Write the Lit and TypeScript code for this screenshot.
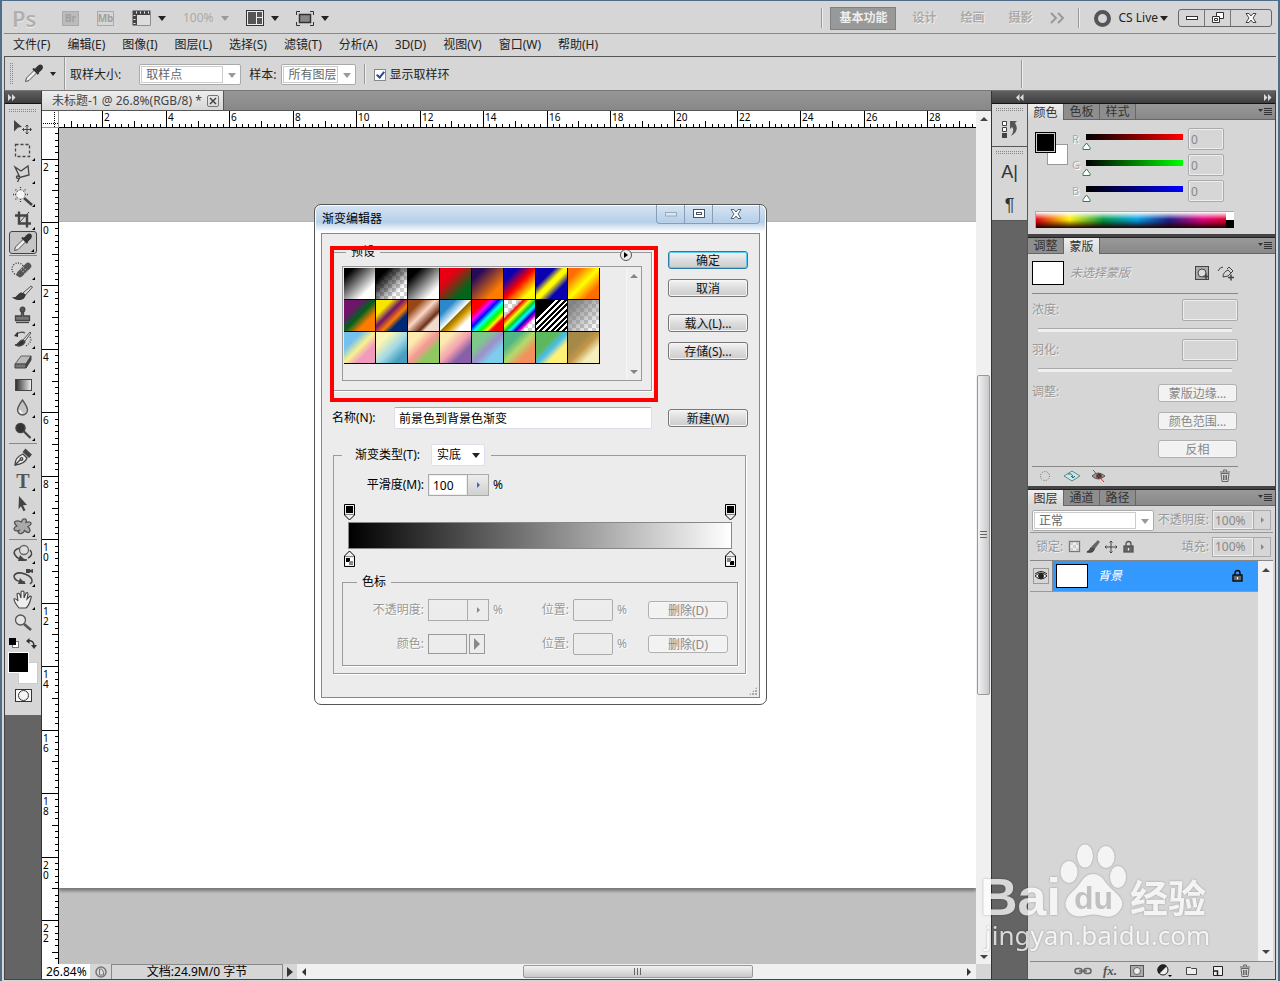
import { LitElement, html, svg, css, nothing } from "lit";
import type { TemplateResult } from "lit";
import { customElement } from "lit/decorators.js";
import { classMap } from "lit/directives/class-map.js";

const UNIT = 63.45;

const menus = ["文件(F)", "编辑(E)", "图像(I)", "图层(L)", "选择(S)", "滤镜(T)", "分析(A)", "3D(D)", "视图(V)", "窗口(W)", "帮助(H)"];

const checker = "repeating-conic-gradient(#cfcfcf 0 25%, #fff 0 50%) 0 0 / 8px 8px";

const presets: string[] = [
  "linear-gradient(135deg,#000 15%,#fff 75%)",
  `linear-gradient(135deg,#000 20%,transparent 75%), ${checker}`,
  "linear-gradient(135deg,#000 20%,#fff 80%)",
  "linear-gradient(135deg,#e60012 30%,#00661a 75%)",
  "linear-gradient(135deg,#290a59 20%,#ff7c00 75%)",
  "linear-gradient(135deg,#0a00b2 22%,#ff0000 50%,#fffc00 80%)",
  "linear-gradient(135deg,#0a00b2 30%,#fffc00 46%,#fffc00 54%,#0a00b2 72%)",
  "linear-gradient(135deg,#ff6e02 20%,#ffff00 50%,#ff6d00 78%)",
  "linear-gradient(135deg,#6f156c 28%,#00601b 50%,#fd7c00 72%)",
  "linear-gradient(135deg,#f9e600 25%,#6f156c 43%,#fd7c00 60%,#002874 73%)",
  "linear-gradient(135deg,#974616 22%,#fbd8c5 45%,#6c2e16 68%,#efdbcd 76%)",
  "linear-gradient(135deg,#2989cc 24%,#fff 49%,#906a00 51%,#d99f00 62%,#fff 78%)",
  "linear-gradient(135deg,#f00 22%,#f0f 33%,#00f 43%,#0ff 53%,#0f0 63%,#ff0 73%,#f00 80%)",
  `linear-gradient(135deg,transparent 26%,#f00 32%,#ff0 42%,#0c3 52%,#0ff 59%,#00c 67%,#f0c 75%,transparent 78%), ${checker}`,
  `linear-gradient(135deg,#000 28%,transparent 28%), linear-gradient(315deg,transparent 20%,transparent 20%), repeating-linear-gradient(135deg,#000 0 2px,#fff 2px 4px)`,
  `linear-gradient(135deg,rgba(120,120,120,.9) 15%,rgba(150,150,150,.1) 85%), ${checker}`,
  "linear-gradient(135deg,#75c1ed 28%,#f9f190 50%,#f19abd 70%)",
  "linear-gradient(135deg,#faf5b4 25%,#a0d8e6 55%,#46a0be 80%)",
  "linear-gradient(135deg,#fceab0 25%,#f69693 50%,#8fc860 70%)",
  "linear-gradient(135deg,#fceab0 22%,#f3a0b0 50%,#8760a8 72%)",
  "linear-gradient(135deg,#7ec88c 30%,#9d90cc 52%,#7dceed 72%)",
  "linear-gradient(135deg,#51b784 28%,#b5d96c 50%,#f3905c 72%)",
  "linear-gradient(135deg,#5cb85c 36%,#4abdf0 52%,#fff078 68%)",
  "linear-gradient(135deg,#a68948 35%,#c39848 52%,#f5efbe 74%)",
];

const g = (body: unknown, w = 24, h = 22) =>
  html`<svg width=${w} height=${h} viewBox="0 0 ${w} ${h}" fill="none" stroke="#444" stroke-width="1.3">${body}</svg>`;

const eyedropper = svg`<path d="M3.500 18.500l1-3.500 8-8 2.500 2.500-8 8z" fill="#eee" stroke="#555" stroke-width="1"/><path d="M11 5.500l5.500 5.500" stroke="#333" stroke-width="2"/><path d="M13 6.500l3.500-3.500q2-1.500 3.200-.2t0 3.200L16 9.500z" fill="#333" stroke="#333"/>`;
const brush = svg`<path d="M12 11l8-7 1.500 1-7 8z" fill="#ddd" stroke="#555" stroke-width="1"/><path d="M3 16c3 0 4-4 7-5l4 2c-1 4-6 6-11 3z" fill="#3c3c3c" stroke="#333"/>`;

const tools: { name: string; art: TemplateResult; corner?: boolean; gap?: boolean; on?: boolean }[] = [
  { name: "移动工具", art: g(svg`<path d="M3 3l8 7-4 .5-4 4z" fill="#444" stroke="none"/><path d="M11.500 12.500h9M16 8v9M14.500 9.500L16 8l1.500 1.500M14.500 15.500L16 17l1.500-1.500M13 11l-1.500 1.500L13 14M19 11l1.500 1.500L19 14" stroke-width="1"/>`) },
  { name: "矩形选框工具", corner: true, art: g(svg`<rect x="4.500" y="4.500" width="14" height="12" stroke-dasharray="3 2"/>`) },
  { name: "套索工具", corner: true, art: g(svg`<path d="M4 4l6 4 7-5 1 9-9 2.500zM9 14q-3-2-3.500 0t3 1l-2 4" />`) },
  { name: "魔棒工具", corner: true, art: g(svg`<path d="M13 12l8 7" stroke-width="2.600"/><circle cx="9.500" cy="8.500" r="4.500" fill="#f4f4f4" stroke="#aaa" stroke-width=".8"/><path d="M9.500 1v3M9.500 13v3M2 8.500h3M14 8.500h3M4.500 3.500l2 2M14.500 3.500l-2 2M4.500 13.500l2-2" stroke-dasharray="1 1" stroke="#444"/>`) },
  { name: "裁剪工具", corner: true, art: g(svg`<path d="M8 2.500v12h12M4 6.500h12v12" stroke-width="2.400"/><path d="M8 14l10-11" stroke-width="1"/>`) },
  { name: "吸管工具", corner: true, on: true, art: g(eyedropper) },
  { name: "修复画笔", corner: true, gap: true, art: g(svg`<circle cx="7" cy="10" r="6" stroke="#333" stroke-dasharray="1 1.500"/><path d="M9 15l8-8" stroke="#555" stroke-width="6.500" stroke-linecap="round"/><path d="M12 8.500l4.500 4M10 10.500l4 4" stroke="#bbb" stroke-dasharray="1 1.500"/>`) },
  { name: "画笔工具", corner: true, art: g(brush) },
  { name: "仿制图章", corner: true, art: g(svg`<circle cx="11.500" cy="4.500" r="2.300" fill="#555"/><path d="M10.500 7h2v4h6v4.500h-14V11h6z" fill="#777"/><path d="M5 17.500h13"/>`) },
  { name: "历史记录画笔", corner: true, art: g(svg`<path d="M12 12l7-8 1 1-6 8z" fill="#ddd" stroke="#555" stroke-width="1"/><path d="M4 17c3 0 4-4 7-5l3 2c-2 4-6 5-10 3z" fill="#333"/><path d="M5 6.500q5-4 9-1.500"/><path d="M3 8l4-4.500V9z" fill="#333" stroke="none"/><path d="M19 9q3 4-4 9" stroke-dasharray="1 1.500"/>`) },
  { name: "橡皮擦", corner: true, art: g(svg`<path d="M4 13l6-8h10l-5 8z" fill="#bbb" stroke="#666" stroke-width="1"/><path d="M4 13h11v4H4z" fill="#777" stroke="#444" stroke-width="1"/><path d="M15 13l5-8v4l-5 8z" fill="#444" stroke="#444" stroke-width="1"/>`) },
  { name: "渐变工具", corner: true, art: html`<span class="gradient-tool"></span>` },
  { name: "模糊工具", corner: true, art: g(svg`<path d="M11.500 3q5 7 5 10a5 5 0 0 1-10 0q0-3 5-10z" fill="#c4c4c4" stroke="#555"/><path d="M9 13q0 3 2.500 3" stroke="#fff"/>`) },
  { name: "减淡工具", corner: true, art: g(svg`<circle cx="9.500" cy="8" r="4.600" fill="#333"/><path d="M12.500 11l7 7" stroke-width="2.200"/>`) },
  { name: "钢笔工具", corner: true, gap: true, art: g(svg`<path d="M4 18q0-8 8-11l4 4q-2 6-12 7z" fill="#e8e8e8"/><path d="M4 18l6-6"/><circle cx="10.500" cy="12" r="1.300"/><path d="M12.500 5l2-2.500 5.500 5-2 2.500z" fill="#444"/>`) },
  { name: "文字工具", corner: true, art: html`<span class="type-tool">T</span>` },
  { name: "路径选择", corner: true, art: g(svg`<path d="M8 3l8 9-4 .3 2.500 5-2 1-2.500-5-2.500 3z" fill="#444" stroke="none"/>`) },
  { name: "自定形状", corner: true, art: g(svg`<path d="M10.500 6q1-4 3.500-3 2 .5 1 3.500 4-1.500 5 .5.500 2-3 3.500 3 3.500 1.500 5.500-2 1.500-5-1.500-1.500 3.500-4.500 3-3-.5-1-3-4.500 1-5-1.500 0-2 3-3Q2.500 7.500 4 5.500q2.500-1.500 6.500.5z" fill="#aaa" stroke="#555"/>`) },
  { name: "3D 旋转", corner: true, gap: true, art: g(svg`<path d="M9 5q-8 2-5 7t12 5M19 7q4 5-2 8" stroke-width="1.500"/><circle cx="13" cy="7" r="4.500" fill="#ddd" stroke="#666"/><path d="M9 12l6 6-8 0z" fill="#444" stroke="none"/>`) },
  { name: "3D 相机", corner: true, art: g(svg`<path d="M14 16Q3 16 3 10q2-5 11-2 8 3 7 8l-2 2" stroke-width="1.500"/><path d="M9 12l6 6H7zM15 3h4v4h-4zM19 4l3-1v4l-3-1z" fill="#444" stroke="none"/>`) },
  { name: "抓手工具", corner: true, art: g(svg`<path d="M8 19q-5-6-5-9 2-1 4 2L6 5q2-2 3 1l1 3V3q2-2 3 0v6l2-5q2-1 2 1l-1 5 3-3q2 0 1 2-2 8-5 10z" fill="#eee" stroke-width="1.100"/>`) },
  { name: "缩放工具", art: g(svg`<circle cx="9.500" cy="8" r="5" fill="#e4e4e4" stroke="#555"/><path d="M13 12l7 6" stroke="#555" stroke-width="2.600"/>`) },
];

const trash = g(svg`<path d="M4 5.500h8l-1 8H5zM3 4h10M6.500 3.500V2h3v1.500M6.500 7v5M8 7v5M9.500 7v5" stroke="#666" stroke-width="1"/>`, 16, 16);
const lock = (c: string) => g(svg`<rect x="3" y="7" width="9" height="6" fill="#666" stroke="${c}"/><path d="M5 7V5q0-2.500 2.500-2.500T10 5v2" stroke="${c}"/><path d="M7.500 9v2.500" stroke="#eee"/>`, 16, 16);

@customElement("app-root")
export class AppRoot extends LitElement {
  static styles = css`
    :host {
      display: block;
      font: 12px/16px "Noto Sans", "Noto Sans CJK SC", sans-serif;
      color: #222;
    }
    * { box-sizing: border-box; }
    svg { display: block; flex: none; }
    button, input, select { font: inherit; color: inherit; margin: 0; padding: 0; border: 0; background: none; border-radius: 0; outline: 0; min-width: 0; }
    button { display: flex; align-items: center; justify-content: center; white-space: nowrap; }
    select { appearance: none; }
    fieldset { margin: 0; padding: 0; min-width: 0; border: 1px solid #9a9a9a; box-shadow: 1px 1px #fff; }
    .app { height: 100vh; min-height: 760px; position: relative; overflow: hidden; display: flex; flex-direction: column; background: #d6d6d6; border: solid #4f6c8b; border-width: 1px 2px 0; padding: 2px 2px 1px; }
    .row { display: flex; align-items: center; }
    .grow { flex: 1; }
    .caret { width: 0; height: 0; border: solid transparent; border-width: 5px 4px 0; border-top-color: #222; flex: none; }
    .caret.soft { border-top-color: #999; }
    .caret.small { border-width: 4px 3px 0; }

    .topbar { height: 31px; border-bottom: 1px solid #888; padding: 0 4px 0 8px; white-space: nowrap; }
    .logo { font: 600 22px/26px "Noto Sans", sans-serif; color: #b0b0b0; text-shadow: 0 1px #eee; width: 50px; }
    .mini { width: 17px; height: 15px; border: 1px solid #aaa; color: #a0a0a0; font-size: 10px; line-height: 12px; font-weight: bold; margin-right: 18px; }
    .filled { background: #bbb; }
    .tool-menu { gap: 7px; margin-right: 17px; color: #aaa; }
    .space { height: 23px; color: #aaa; font-weight: bold; padding: 0 8px; margin-right: 8px; text-shadow: 1px 1px #eee; }
    .space.on { background: #999; border: 1px solid #808080; color: #eee; text-shadow: none; margin-left: 7px; }
    .vline { width: 2px; height: 20px; border-left: 1px solid #999; border-right: 1px solid #eee; flex: none; }
    .vline.full { height: 33px; }
    .live { gap: 7px; margin: 0 10px 0 14px; }
    .ring { width: 17px; height: 17px; border: 4px solid #555; border-radius: 50%; }
    .live .caret { margin-left: -5px; }
    .wins { border: 1px solid #666; border-radius: 3px; height: 18px; }
    .wins button { width: 26px; height: 16px; border-right: 1px solid #777; }
    .wins button:last-child { width: 40px; border: 0; }
    .menus { height: 23px; gap: 17px; padding: 0 9px; border-bottom: 1px solid #555; white-space: nowrap; }
    .menus a { color: inherit; text-decoration: none; }

    .options { height: 34px; padding: 0 5px; border-left: 1px solid #555; white-space: nowrap; border-bottom: 1px solid #777; }
    .grip, .dots { background: repeating-linear-gradient(#d6d6d6 0 1px, transparent 1px 2px), repeating-linear-gradient(90deg, #888 0 1px, transparent 1px 2px); flex: none; }
    .grip { width: 4px; height: 23px; }
    .options .dropper { width: 50px; gap: 7px; }
    .options .first { margin-left: 4px; }
    .options > label, .options .combo { position: relative; top: 1px; }
    .combo { position: relative; display: flex; height: 21px; border: 1px solid #aaa; border-radius: 2px; background: #fff; padding: 1px; }
    .combo select { flex: 1; border: 1px solid #ccc; padding-left: 4px; color: #666; margin-right: 16px; line-height: 16px; }
    .combo .caret { position: absolute; right: 4px; top: 8px; }
    .wide { width: 102px; margin: 0 8px 0 18px; }
    .mid { width: 75px; margin: 0 8px 0 5px; }
    .check { appearance: none; width: 12px; height: 12px; background: #fff; border: 1px solid #888; margin: 0 3px 0 8px; position: relative; }
    .check:checked::after { content: ""; position: absolute; left: 3px; top: 0; width: 3px; height: 6px; border: solid #24489a; border-width: 0 2px 2px 0; transform: rotate(40deg); }
    .check-label { display: flex; align-items: center; }
    .options .last { height: 28px; margin-right: 248px; }

    .work { flex: 1; min-height: 0; display: flex; border: solid #444; border-width: 0 1px 1px; background: #646464; }
    .left { width: 37px; border-right: 1px solid #333; display: flex; flex-direction: column; flex: none; }
    .strip { height: 13px; background: linear-gradient(#606060, #3e3e3e); border-bottom: 1px solid #111; flex: none; display: flex; align-items: center; padding: 0 3px; }
    .strip svg { fill: #ddd; }
    .tools { background: #d6d6d6; display: flex; flex-direction: column; align-items: center; height: 611px; padding-top: 4px; }
    .dots { height: 4px; width: 28px; margin-bottom: 4px; }
    .tool { position: relative; width: 28px; height: 23px; flex: none; }
    .tool.gap { margin-top: 4px; }
    .tool.gap::before { content: ""; position: absolute; top: -3px; left: 0; right: 0; border-top: 1px solid #888; }
    .tool.corner::after { content: ""; position: absolute; right: 2px; bottom: 1px; border-left: 3px solid transparent; border-bottom: 3px solid #000; }
    .tool.on { border: 1px solid #444; border-radius: 3px; background: #c6c6c6; }
    .gradient-tool { width: 17px; height: 12px; border: 1px solid #444; background: linear-gradient(90deg, #333, #eee); }
    .type-tool { font: bold 20px/22px "Liberation Serif", serif; color: #555; }
    .defaults { gap: 7px; margin: 2px 0; height: 14px; }
    .fgbg { width: 30px; height: 32px; display: grid; grid-template: 10px 11px 11px / 10px 11px 9px; }
    .fgbg i:last-child { grid-area: 1 / 1 / 3 / 3; background: #000; border: 1px solid #fff; }
    .fgbg i:first-child { grid-area: 2 / 2 / 4 / 4; background: #fff; border: 1px solid #ccc; }
    .quick { width: 17px; height: 13px; border: 1px solid #333; background: #f6f6f6; margin-top: 5px; }
    .quick::after { content: ""; width: 9px; height: 9px; border: 1px solid #333; border-radius: 50%; }

    .doc { flex: 1; min-width: 0; display: flex; flex-direction: column; background: #d6d6d6; }
    .tabs { height: 20px; display: flex; background: linear-gradient(#969696, #888); border-bottom: 1px solid #555; flex: none; }
    .doc-tab { background: linear-gradient(#eee, #d6d6d6); padding: 0 4px 0 10px; gap: 5px; border-right: 1px solid #555; color: #444; white-space: nowrap; }
    .doc-tab button { width: 12px; height: 12px; border: 1px solid #777; border-radius: 2px; }
    .view { flex: 1; min-height: 0; display: grid; grid-template: 17px minmax(0, 1fr) / 17px minmax(0, 1fr) 15px; }
    .corner-box { background: #fff; border-bottom: 1px solid #999; border-right: 1px solid #999; }
    .ruler { background: #fff; overflow: hidden; position: relative; }
    .ruler svg { position: absolute; left: 0; top: 0; width: 100%; height: 100%; }
    .ruler text { font: 10px "Noto Sans", sans-serif; fill: #000; stroke: none; }
    .ruler.h { border-bottom: 1px solid #000; }
    .ruler.v { border-right: 1px solid #000; }
    .canvas { display: grid; grid-template-rows: 94px 666px 1fr; background: #c0c0c0; overflow: hidden; }
    .paper { grid-row: 2; background: #fff; box-shadow: 0 0 1px #888, 0 3px 3px #777; }
    .vbar, .hbar { display: flex; align-items: center; background: #f0f0f0; }
    .vbar { flex-direction: column; }
    .view > .vbar { grid-area: 1 / 3 / 3 / 4; padding: 6px 0 5px; }
    .up, .down, .prev, .next { width: 0; height: 0; border: 4px solid transparent; flex: none; }
    .up { border-width: 0 4px 4px; border-bottom-color: #444; }
    .down { border-width: 4px 4px 0; border-top-color: #444; }
    .prev { border-width: 4px 4px 4px 0; border-right-color: #333; }
    .next { border-width: 4px 0 4px 4px; border-left-color: #333; }
    .thumb { display: flex; align-items: center; justify-content: center; border: 1px solid #999; border-radius: 2px; }
    .vbar .thumb { width: 13px; background: linear-gradient(90deg, #f2f2f2, #c8c8cc); flex: 316; }
    .hbar .thumb { height: 13px; background: linear-gradient(#f2f2f2, #c8c8cc); flex: 226; }
    .notch-v { width: 7px; height: 8px; background: repeating-linear-gradient(#666 0 1px, transparent 1px 3px); }
    .notch-h { width: 8px; height: 7px; background: repeating-linear-gradient(90deg, #666 0 1px, transparent 1px 3px); }
    .a { flex: 253; } .b { flex: 259; } .c { flex: 214; } .d { flex: 211; }
    .status { height: 15px; flex: none; white-space: nowrap; line-height: 15px; color: #000; }
    .zoom { width: 48px; background: #fff; height: 15px; padding-left: 4px; }
    .info { width: 172px; height: 15px; border: solid #888; border-width: 1px 1px 0; line-height: 14px; text-align: center; }
    .clock { width: 21px; display: flex; justify-content: center; }
    .go { width: 14px; height: 15px; }
    .go .next { border-width: 5px 0 5px 6px; }
    .hbar { flex: 1; height: 15px; padding: 0 5px; }
    .size { width: 15px; }

    .right { display: grid; grid-template: 13px minmax(0, 1fr) / 36px 247px; border-left: 1px solid #333; flex: none; }
    .right > .strip { grid-column: 1 / 3; padding-left: 24px; justify-content: space-between; }
    .dock { border-right: 1px solid #555; }
    .dock-group { background: #d6d6d6; display: flex; flex-direction: column; align-items: center; padding-top: 3px; border-bottom: 1px solid #555; }
    .dock-group .dots { margin-bottom: 1px; }
    .dock-group button { height: 31px; width: 34px; color: #333; font: 18px/20px "Liberation Sans", sans-serif; }
    .dock-group .tall { height: 34px; }
    .panels { display: flex; flex-direction: column; min-height: 0; background: #d6d6d6; }
    .ptabs { height: 16px; display: flex; align-items: stretch; background: linear-gradient(#999, #888); border-bottom: 1px solid #666; flex: none; }
    .ptabs button { width: 36px; color: #333; border-right: 1px solid #666; background: #8e8e8e; line-height: 15px; }
    .ptabs button.on { background: linear-gradient(#eee, #d6d6d6); height: 16px; }
    .ptabs .menu-mark { width: 14px; background: none; border: 0; margin: 0 3px 0 auto; }
    .color { height: 114px; padding: 8px 41px 0 7px; display: grid; grid-template: 74px 17px / 31px 1fr; gap: 9px 6px; }
    .pair { height: 34px; margin-top: 4px; display: grid; grid-template: 12px 9px 12px / 12px 9px 12px; }
    .pair i:first-child { grid-area: 2 / 2 / 4 / 4; background: #fff; border: 1px solid #999; }
    .pair i:last-child { grid-area: 1 / 1 / 3 / 3; background: #000; border: 1px solid #000; box-shadow: inset 0 0 0 1px #ccc; }
    .channels { display: grid; gap: 4px; align-content: start; }
    .channel { display: grid; grid-template: 22px / 10px 1fr 36px; align-items: center; color: #aaa; text-shadow: 1px 1px #fff; margin-right: 10px; font-size: 11px; }
    .channel input[type="range"] { appearance: none; height: 16px; margin: 6px 5px 0 0; }
    .red { background: linear-gradient(90deg, #000, #f00) 4px 0 / calc(100% - 4px) 6px no-repeat; }
    .green { background: linear-gradient(90deg, #000, #0f0) 4px 0 / calc(100% - 4px) 6px no-repeat; }
    .blue { background: linear-gradient(90deg, #000, #00f) 4px 0 / calc(100% - 4px) 6px no-repeat; }
    input[type="range"]::-webkit-slider-thumb { appearance: none; width: 9px; height: 8px; margin-top: 7px; background: url("data:image/svg+xml,%3Csvg xmlns='http://www.w3.org/2000/svg' width='9' height='8'%3E%3Cpath d='M4.5 1L8 5.500v2H1v-2z' fill='%23fff' stroke='%23284'/%3E%3C/svg%3E"); }
    .field { height: 22px; border: 1px solid #aaa; border-radius: 2px; background: transparent; box-shadow: inset 0 0 0 1px #eee; color: #888; padding: 0 2px; font-size: 12px; }
    .panels .field { background: #d6d6d6; }
    .spectrum { grid-column: 1 / 3; border: 1px solid #aaa; border-width: 1px 0 0 1px; display: grid; grid-template: 1fr 1fr / 1fr 8px; background: linear-gradient(#fff, transparent 45%, transparent 50%, #200 100%), linear-gradient(90deg, #e60012, #fff100 17%, #009944 34%, #00a0e9 51%, #1d2088 67%, #e4007f 84%, #e60012); }
    .spectrum i { grid-column: 2; background: #fff; }
    .spectrum i:last-child { background: #000; }
    .gap-line { height: 4px; background: #444; border-bottom: 1px solid #222; flex: none; }
    .mask { height: 232px; padding: 7px 37px 0 4px; color: #999; text-shadow: 1px 1px #eee; display: flex; flex-direction: column; flex: none; }
    .mask-head { height: 24px; gap: 6px; margin-bottom: 8px; }
    .thumb-white { width: 32px; height: 24px; background: #fff; border: 1px solid #000; flex: none; }
    .mask-head em { flex: 1; }
    .mask .rule { border-top: 1px solid #888; height: 6px; flex: none; }
    .mask-row { justify-content: space-between; height: 22px; margin-bottom: 7px; }
    .mask-row .field { width: 56px; }
    .groove { appearance: none; height: 4px; border-top: 1px solid #aaa; background: #eef0ee; margin: 0 6px 7px; overflow: hidden; }
    .mask input.groove::-webkit-slider-thumb { opacity: 0; height: 1px; margin: 0; }
    .mask-actions { display: grid; grid-template-columns: 1fr 79px; row-gap: 10px; padding: 5px 1px 8px 0; }
    .mask-actions button { grid-column: 2; }
    .mask-actions span { grid-area: 1 / 1; }
    .push { height: 18px; border: 1px solid #777; border-radius: 3px; background: linear-gradient(#f4f4f4, #ddd 50%, #ccc); box-shadow: inset 0 0 0 1px #f6f6f6; color: #111; line-height: 16px; padding-top: 1px; }
    .push:disabled { color: #888; border-color: #b0b0b0; background: #f2f2f2; text-shadow: none; }
    .push.default { border-color: #2a7aa8; box-shadow: inset 0 0 0 1px #58cdf4; }
    .mask-foot { gap: 10px; padding: 0 5px; height: 18px; border-top: 1px solid #888; }

    .layers { flex: 1; min-height: 0; display: flex; flex-direction: column; padding: 2px 2px 0; color: #999; }
    .lrow { height: 24px; padding: 0 2px; white-space: nowrap; text-shadow: 1px 1px #eee; flex: none; }
    .lrow .combo { width: 122px; }
    .lrow label { flex: 1; text-align: right; margin-right: 3px; }
    .lrow .spin .field { width: 42px; }
    .lrow + .lrow { border-top: 1px solid #999; height: 28px; padding-left: 6px; }
    .lrow .icons { gap: 2px; margin-left: 4px; }
    .spin { display: flex; }
    .spin .field { border-radius: 0; height: 20px; }
    .spin button { width: 17px; border: 1px solid #aaa; border-left: 0; }
    .spin .next { border-width: 3px 0 3px 3px; border-left-color: #888; }
    .list { flex: 1; display: flex; border-top: 1px solid #888; min-height: 0; }
    .list-body { flex: 1; }
    .layer { height: 31px; border-bottom: 1px solid #999; background: linear-gradient(90deg, #d6d6d6 22px, #888 22px 23px, #3399ff 23px); color: #fff; font-style: italic; }
    .eye { width: 16px; height: 16px; margin: 0 7px 0 3px; border: 1px solid #999; }
    .layer .thumb-white { margin-right: 10px; }
    .layer > svg { margin-left: auto; margin-right: 12px; }
    .list .vbar { width: 15px; padding: 7px 0; justify-content: space-between; }
    .lfoot { height: 18px; border-top: 1px solid #888; justify-content: flex-end; gap: 11px; padding-right: 20px; flex: none; }
    .lfoot button { width: 16px; height: 16px; color: #555; }
    .fx { font: italic bold 13px/16px "Liberation Serif", serif; }

    .dialog { position: absolute; left: 312px; top: 203px; width: 453px; border: 1px solid #555; border-radius: 7px; background: linear-gradient(#d5e4f3, #b7cfe9 17px, #fff 27px); padding: 0 6px 6px; color: #000; box-shadow: inset 0 0 0 1px #fff; }
    .title { height: 28px; display: flex; justify-content: space-between; }
    .title h2 { font: inherit; margin: 6px 0 0 1px; }
    .caption { display: flex; height: 19px; border: 1px solid #889db5; border-top: 0; border-radius: 0 0 4px 4px; }
    .caption button { width: 28px; border-right: 1px solid #889db5; }
    .caption button:last-child { width: 46px; border: 0; }
    .inner { position: relative; background: #ececec; border: 1px solid #888; padding: 11px 11px 23px; box-shadow: 0 0 0 1px #fff; }
    .top { display: flex; gap: 16px; }
    .main { flex: 1; }
    .presets { padding: 7px 9px 9px 8px; position: relative; }
    legend { line-height: 14px; padding: 0 5px; margin-left: 14px; }
    .presets legend { margin-left: 4px; }
    .play { position: absolute; right: 19px; top: -10px; width: 12px; height: 12px; border: 1px solid #555; border-radius: 50%; background: #ececec; }
    .play .next { border-width: 3px 0 3px 4px; border-left-color: #000; }
    .box { height: 115px; border: 1px solid #999; display: flex; justify-content: space-between; padding: 1px 0 0 1px; }
    .grid { display: grid; grid-template-columns: repeat(8, 32px); grid-auto-rows: 32px; }
    .grid button { border: solid #000; border-width: 0 1px 1px 0; background-origin: border-box; }
    .box .vbar { width: 15px; border-left: 1px solid #fff; padding: 6px 0; justify-content: space-between; opacity: .6; }
    .name { margin-top: 16px; }
    .name label { width: 62px; margin-left: -1px; }
    .text { height: 22px; background: #fff; border: 1px solid #dde; border-top-color: #aaa; padding: 0 4px; flex: 1; border-radius: 2px; }
    .side { width: 80px; display: flex; flex-direction: column; gap: 10px; padding-top: 6px; }
    .side .load { margin-top: 7px; }
    .side .new { margin-top: 39px; }
    .kind { margin: 15px 2px 0 0; padding: 8px 7px 7px 8px; }
    .kind > legend { display: flex; align-items: center; gap: 5px; margin-left: 0; padding: 0 6px 0 13px; }
    .kind > legend label { min-width: 71px; }
    .kind legend .combo { width: 54px; height: 22px; border-color: #dde; }
    .kind legend select { border: 0; color: #000; margin: 0; }
    .smooth { gap: 4px; margin-bottom: 8px; }
    .smooth label { width: 82px; text-align: right; }
    .smooth .spin .field { background: #fff; color: #000; padding: 0 4px; }
    .smooth .spin .next { border-left-color: #46b; }
    .smooth .spin button { background: linear-gradient(#eee, #d0d0d0); }
    .dialog .spin .field { width: 40px; height: 22px; }
    .dialog .spin button { width: 21px; }
    .ramp { margin: 0 2px 8px; }
    .stops { display: flex; justify-content: space-between; height: 17px; }
    .bar { height: 27px; margin: 1px 4px; border: 1px solid #888; background: linear-gradient(90deg, #000, #fff); }
    .color-stops { padding: 10px 9px 10px 0; color: #999; }
    .color-stops legend { color: #000; margin-left: 14px; }
    .stop-row { display: grid; grid-template-columns: 81px 61px 44px 28px 40px 27px 80px; gap: 4px; align-items: center; height: 22px; text-shadow: 1px 1px #fff; white-space: nowrap; }
    .stop-row + .stop-row { margin-top: 12px; }
    .stop-row label { text-align: right; }
    .swatch-pick { display: flex; gap: 2px; }
    .swatch-pick button { width: 39px; height: 20px; border: 1px solid #999; }
    .swatch-pick button:last-child { width: 16px; }
    .swatch-pick .next { border-width: 6px 0 6px 6px; border-left-color: #888; }
    .resize { position: absolute; right: 2px; bottom: 2px; width: 8px; height: 8px; background: radial-gradient(circle at 1px 1px, #aaa 1px, transparent 0) 0 0 / 3px 3px; clip-path: polygon(100% 0, 100% 100%, 0 100%); }
    .highlight { position: absolute; left: 328px; top: 245px; width: 328px; height: 156px; border: 4px solid #f00; pointer-events: none; }
    .mark { position: absolute; right: 62px; bottom: 27px; pointer-events: none; filter: drop-shadow(0 0 1px rgba(0, 0, 0, .35)); opacity: .75; }
    .latin { font-family: "Liberation Sans", sans-serif; font-weight: bold; }
    .han { font: bold 38px "Noto Sans CJK SC", sans-serif; }
    .site { font: 26px "Noto Sans", sans-serif; }
  `;

  private ruler(vertical: boolean) {
    const first = vertical ? -1 : 0;
    const origin = vertical ? 94 : -20;
    const room = vertical ? Math.max(window.innerHeight, 760) - 145 : window.innerWidth - 363;
    const out: unknown[] = [];
    for (let i = first * 20; i < 800; i++) {
      const p = Math.round(origin + (i * UNIT) / 10) + 0.5;
      if (p < 0) continue;
      if (p > room) break;
      const len = i % 10 === 0 ? 17 : i % 5 === 0 ? 6 : 3;
      out.push(vertical
        ? svg`<path d="M${16 - len} ${p}H16"/>`
        : svg`<path d="M${p} ${16 - len}V16"/>`);
      if (i % 10 === 0 && p + 16 < room) {
        const label = String(Math.abs(i / 5));
        out.push(vertical
          ? [...label].map((ch, n) => svg`<text x="1" y=${p + 11 + n * 10}>${ch}</text>`)
          : svg`<text x=${p + 1.5} y="10">${label}</text>`);
      }
    }
    return html`<div class="ruler ${vertical ? "v" : "h"}"><svg stroke="#000" shape-rendering="crispEdges">${out}</svg></div>`;
  }

  private chevrons(back: boolean) {
    return html`<svg width="8" height="7" viewBox="0 0 8 7">${back
      ? svg`<path d="M3.500 0v7L0 3.500zM7.500 0v7L4 3.500z"/>`
      : svg`<path d="M0 0v7l3.500-3.500zM4 0v7l3.500-3.500z"/>`}</svg>`;
  }

  private panelTabs(names: string[], active: number) {
    return html`<div class="ptabs">${names.map((n, i) => html`<button class=${classMap({ on: i === active })}>${n}</button>`)}
      <button class="menu-mark" aria-label="面板菜单"><svg width="14" height="9"><path d="M0 2h5L2.500 5z" fill="#333"/><path d="M6 1.500h8M6 3.500h8M6 5.500h8M6 7.500h8" stroke="#333"/></svg></button></div>`;
  }

  private spin(id: string, value: string, disabled = true) {
    return html`<span class="spin"><input class="field" id=${id} .value=${value} ?disabled=${disabled}><button aria-label="调整数值" ?disabled=${disabled}><i class="next"></i></button></span>`;
  }

  private stop(up: boolean, right: boolean) {
    return up
      ? html`<svg width="11" height="17"><path d="M.5.500h10v10.500l-5 5-5-5z" fill="#eee" stroke="#000"/><path d="M2 2h7v7H2z"/><path d="M1 10.500h9" stroke="#888"/></svg>`
      : html`<svg width="11" height="17"><path d="M.5 16.500v-10.500l5-5 5 5v10.500z" fill="#eee" stroke="#000"/><path d="M1 6.500h9" stroke="#888"/><path d="M2 8h7v7H2z" fill="#fff"/><path d=${right ? "M5 11h4v4H5z" : "M2 8h4v4H2z"}/><path d=${right ? "M2 8h4v4H2z" : "M5 11h4v4H5z"} fill="#888"/></svg>`;
  }

  private topBar() {
    return html`
      <header class="topbar row">
        <span class="logo">Ps</span>
        <button class="mini filled">Br</button><button class="mini">Mb</button>
        <button class="tool-menu"><svg width="19" height="16"><rect x=".5" y=".5" width="18" height="15" fill="#444"/><rect x="5" y="5" width="13" height="10" fill="#ddd"/><path d="M4 2.500h14" stroke="#eee" stroke-width="2" stroke-dasharray="1 3"/><path d="M2.500 5v10" stroke="#eee" stroke-width="2" stroke-dasharray="1 3"/></svg><i class="caret"></i></button>
        <button class="tool-menu">100%<i class="caret soft"></i></button>
        <button class="tool-menu"><svg width="18" height="16"><rect x=".5" y=".5" width="17" height="15" fill="#eee" stroke="#333"/><path d="M2 2h8v12H2zM11 2h5v5h-5zM11 8h5v6h-5z" fill="#555"/></svg><i class="caret"></i></button>
        <button class="tool-menu"><svg width="18" height="15" fill="none" stroke="#333"><path d="M.5 4V.5H4M14 .5h3.500V4M17.500 11v3.500H14M4 14.500H.500V11"/><rect x="3.500" y="3.500" width="11" height="8" fill="#888" stroke-width="1.500"/></svg><i class="caret"></i></button>
        <span class="grow"></span>
        <span class="vline"></span>
        <button class="space on">基本功能</button><button class="space">设计</button><button class="space">绘画</button><button class="space">摄影</button>
        <svg width="30" height="14" fill="none" stroke="#999" stroke-width="2"><path d="M3 2l5 5-5 5M10 2l5 5-5 5"/></svg>
        <span class="vline"></span>
        <button class="live"><i class="ring"></i>CS Live <i class="caret"></i></button>
        <div class="wins row">
          <button aria-label="最小化"><svg width="12" height="6"><rect x=".5" y="1.500" width="11" height="3" fill="#fff" stroke="#333"/></svg></button>
          <button aria-label="还原"><svg width="12" height="12" fill="#fff" stroke="#333"><path d="M4.500.500h7v6h-7z"/><path d="M.5 4.500h7v6h-7zM2.500 6.500h3v2h-3z"/></svg></button>
          <button aria-label="关闭"><svg width="12" height="10"><path d="M1 .5h3l2 2.500 2-2.500h3L8 5l3 4.500H8L6 7 4 9.500H1L4 5z" fill="#fff" stroke="#444"/></svg></button>
        </div>
      </header>
      <nav class="menus row">${menus.map((m) => html`<a href="#">${m}</a>`)}</nav>
      <div class="options row">
        <span class="grip"></span>
        <button class="dropper" aria-label="吸管工具">${g(eyedropper, 21, 21)}<i class="caret small"></i></button>
        <span class="vline full"></span>
        <label for="size" class="first">取样大小:</label>
        <span class="combo wide"><select id="size"><option>取样点</option></select><i class="caret soft"></i></span>
        <label for="sample">样本:</label>
        <span class="combo mid"><select id="sample"><option>所有图层</option></select><i class="caret soft"></i></span>
        <span class="vline"></span>
        <label class="check-label"><input class="check" type="checkbox" checked>显示取样环</label>
        <span class="grow"></span><span class="vline last"></span>
      </div>`;
  }

  private toolbox() {
    return html`<aside class="left">
      <div class="strip">${this.chevrons(false)}</div>
      <div class="tools"><span class="dots"></span>
        ${tools.map((t) => html`<button class=${classMap({ tool: true, corner: !!t.corner, gap: !!t.gap, on: !!t.on })} aria-label=${t.name}>${t.art}</button>`)}
        <div class="defaults row"><svg width="10" height="10"><rect x="3.500" y="3.500" width="6" height="6" fill="#fff" stroke="#777"/><rect width="7" height="7" fill="#000"/></svg>
          <svg width="11" height="11" fill="none" stroke="#333" stroke-width="1.500"><path d="M2 3q6-1 6 5"/><path d="M3.500 0v6L0 3zM5 7h6l-3 4z" fill="#333" stroke="none"/></svg></div>
        <div class="fgbg"><i></i><i></i></div>
        <button class="quick" aria-label="快速蒙版"></button>
      </div></aside>`;
  }

  private document() {
    return html`<main class="doc">
      <div class="tabs"><div class="doc-tab row">未标题-1 @ 26.8%(RGB/8) * <button aria-label="关闭文档"><svg width="8" height="8"><path d="M1 1l6 6M7 1L1 7" stroke="#444" stroke-width="1.500"/></svg></button></div></div>
      <div class="view">
        <div class="corner-box"><svg width="16" height="16" stroke="#000" stroke-dasharray="1 1"><path d="M12.500 1v15M1 12.500h15"/></svg></div>
        ${this.ruler(false)}
        <div class="vbar"><i class="up"></i><i class="a"></i><div class="thumb"><i class="notch-v"></i></div><i class="b"></i><i class="down"></i></div>
        ${this.ruler(true)}
        <div class="canvas"><div class="paper"></div></div>
      </div>
      <div class="status row">
        <span class="zoom">26.84%</span><span class="clock"><svg width="12" height="12" fill="none" stroke="#777"><circle cx="6" cy="6" r="5" stroke-width="1.500"/><path d="M4.500 3v6h4V6l-2-3z" fill="#ddd"/></svg></span>
        <span class="info">文档:24.9M/0 字节</span>
        <button class="go" aria-label="状态菜单"><i class="next"></i></button>
        <div class="hbar"><i class="prev"></i><i class="c"></i><div class="thumb"><i class="notch-h"></i></div><i class="d"></i><i class="next"></i></div><span class="size"></span>
      </div></main>`;
  }

  private panels() {
    return html`<aside class="right">
      <div class="strip">${this.chevrons(true)}${this.chevrons(false)}</div>
      <div class="dock">
        <div class="dock-group"><span class="dots"></span><button class="tall" aria-label="历史记录"><svg width="17" height="18" fill="none" stroke="#444"><path d="M1.500 1.500h4v4h-4zM1.500 7.500h4v4h-4z" fill="#fff"/><path d="M1 13h5v5H1z" fill="#444" stroke="none"/><path d="M9 1h7l-2 2q5 8-4 13 4-6 1-9L9 9z" fill="#555" stroke="none"/></svg></button></div>
        <div class="dock-group"><span class="dots"></span><button class="tall">A|</button><button>¶</button></div>
      </div>
      <div class="panels">
        ${this.panelTabs(["颜色", "色板", "样式"], 0)}
        <section class="color">
          <div class="pair"><i></i><i></i></div>
          <div class="channels">${[["R", "red"], ["G", "green"], ["B", "blue"]].map(([n, c]) => html`<div class="channel"><label for=${c}>${n}</label><input id=${c} class=${c} type="range" value="0" max="255"><input class="field" aria-label=${n} value="0"></div>`)}</div>
          <div class="spectrum"><i></i><i></i></div>
        </section>
        <div class="gap-line"></div>
        ${this.panelTabs(["调整", "蒙版"], 1)}
        <section class="mask">
          <div class="mask-head row"><i class="thumb-white"></i><em>未选择蒙版</em>
            <svg width="15" height="15" fill="none" stroke="#444"><rect x=".5" y=".5" width="13" height="13" fill="#aaa"/><circle cx="7" cy="7" r="4" fill="#ddd"/><path d="M8 10.500h6M11 7.500v6" stroke-width="1.500"/></svg>
            <svg width="22" height="16" fill="none" stroke="#444"><path d="M7 12q0-5 5-7l3 3q-2 4-8 4zM11 4l2-2 4 4-2 2M2 6q2-4 5-4"/><path d="M12 12.500h6M15 9.500v6" stroke-width="1.500"/></svg></div>
          <div class="rule"></div>
          <div class="mask-row row"><label for="density">浓度:</label><input id="density" class="field" disabled></div><input class="groove" type="range" aria-label="浓度" disabled>
          <div class="mask-row row"><label for="feather">羽化:</label><input id="feather" class="field" disabled></div><input class="groove" type="range" aria-label="羽化" disabled>
          <div class="mask-actions"><span>调整:</span><button class="push" disabled>蒙版边缘...</button><button class="push" disabled>颜色范围...</button><button class="push" disabled>反相</button></div>
          <div class="mask-foot row"><svg width="16" height="16" fill="none" stroke="#666"><circle cx="8" cy="8" r="4.500" stroke-dasharray="1 1.500"/></svg>
            <svg width="18" height="12" fill="#cfe6e0" stroke="#5a8f88"><path d="M1 6l8-5 8 5-8 5z"/><path d="M5 4q5-1 5 4M8 6l2 2 2-2" stroke="#269" fill="none"/></svg>
            <svg width="16" height="14" fill="none" stroke="#555"><path d="M1 7q6-6 13 0-7 6-13 0z" fill="#999"/><circle cx="8" cy="7" r="2.500" fill="#333"/><path d="M2 1l11 12" stroke="#d33"/></svg>
            <span class="grow"></span>${trash}</div>
        </section>
        <div class="gap-line"></div>
        ${this.panelTabs(["图层", "通道", "路径"], 0)}
        <section class="layers">
          <div class="lrow row"><span class="combo"><select aria-label="混合模式"><option>正常</option></select><i class="caret soft"></i></span><label for="opacity">不透明度:</label>${this.spin("opacity", "100%")}</div>
          <div class="lrow row"><span>锁定:</span><span class="icons row">
            ${g(svg`<rect x="2.500" y="2.500" width="10" height="10" stroke="#777" fill="#eee"/><path d="M3 3h3v3H3zM9 3h3v3H9zM6 6h3v3H6zM3 9h3v3H3zM9 9h3v3H9z" fill="#ccc" stroke="none"/>`, 16, 16)}
            ${g(svg`<path d="M7 8l6-6 1 1-5 7z" fill="#666" stroke="#666"/><path d="M2 13q3-1 4-4l3 1q-1 4-7 3z" fill="#555"/>`, 16, 16)}
            ${g(svg`<path d="M2 8h12M8 2v12M6.500 3.500L8 2l1.500 1.500M6.500 12.500L8 14l1.500-1.500M3.500 6.500L2 8l1.500 1.500M12.500 6.500L14 8l-1.500 1.500" stroke-width="1"/>`, 16, 16)}
            ${lock("#555")}</span><label for="fill">填充:</label>${this.spin("fill", "100%")}</div>
          <div class="list"><div class="list-body"><div class="layer row"><button class="eye" aria-label="可见性"><svg width="14" height="12" fill="none" stroke="#222"><path d="M1 6q6-6 12 0-6 6-12 0z" fill="#fff"/><circle cx="7" cy="6" r="2.500" fill="#222"/><path d="M1 4q6-5 12 0"/></svg></button><i class="thumb-white"></i>背景${lock("#000")}</div></div>
            <div class="vbar"><i class="up"></i><i class="down"></i></div></div>
          <div class="lfoot row">
            <button aria-label="链接"><svg width="18" height="8" fill="none" stroke="#666" stroke-width="1.500"><rect x="1" y="1.500" width="7" height="5" rx="2.500"/><rect x="10" y="1.500" width="7" height="5" rx="2.500"/><path d="M5 4h8"/></svg></button>
            <button class="fx">fx.</button>
            <button aria-label="蒙版"><svg width="14" height="12"><rect x=".5" y=".5" width="13" height="11" fill="#aaa" stroke="#555"/><circle cx="7" cy="6" r="3.500" fill="#eee" stroke="#666"/></svg></button>
            <button aria-label="调整图层"><svg width="16" height="14"><circle cx="7" cy="6" r="5" fill="#eee" stroke="#222"/><path d="M3 10A5.500 5.500 0 0 1 11 2z" fill="#222"/><path d="M12 11h4l-2 2z"/></svg></button>
            <button aria-label="新建组"><svg width="13" height="11"><path d="M1.500 2.500h4l1 1h5v6h-10z" fill="#eee" stroke="#444"/></svg></button>
            <button aria-label="新建图层"><svg width="12" height="12"><path d="M1.500 1.500h9v9h-9z" fill="#eee" stroke="#222"/><path d="M1.500 6h4v4.500" fill="none" stroke="#222" stroke-width="1.500"/></svg></button>
            <button aria-label="删除图层">${trash}</button>
          </div>
        </section>
      </div></aside>`;
  }

  private stopRow(label: string, id: string, picker: boolean) {
    return html`<div class="stop-row"><label for=${id}>${label}</label>
      ${picker ? html`<span class="swatch-pick"><button id=${id} disabled></button><button aria-label="选择颜色" disabled><i class="next"></i></button></span>` : this.spin(id, "")}
      <span>${picker ? nothing : "%"}</span><label for="${id}-pos">位置:</label><input id="${id}-pos" class="field" disabled><span>%</span><button class="push" disabled>删除(D)</button></div>`;
  }

  private dialog() {
    return html`<div class="dialog" role="dialog" aria-label="渐变编辑器">
      <div class="title"><h2>渐变编辑器</h2><div class="caption">
        <button aria-label="最小化" disabled><svg width="12" height="5"><rect x=".5" y=".5" width="11" height="3.500" fill="#dde6f0" stroke="#9ab"/></svg></button>
        <button aria-label="最大化"><svg width="12" height="10" fill="#fff" stroke="#456"><rect x=".5" y=".5" width="11" height="8"/><rect x="3.500" y="3.500" width="5" height="2"/></svg></button>
        <button aria-label="关闭"><svg width="12" height="10"><path d="M1 .5h3l2 2.500 2-2.500h3L8 5l3 4.500H8L6 7 4 9.500H1L4 5z" fill="#fff" stroke="#567"/></svg></button></div></div>
      <div class="inner">
        <div class="top">
          <div class="main">
            <fieldset class="presets"><legend>预设</legend><button class="play" aria-label="预设菜单"><i class="next"></i></button>
              <div class="box"><div class="grid">${presets.map((p, i) => html`<button aria-label="渐变 ${i + 1}" style="background:${p}"></button>`)}</div><div class="vbar"><i class="up"></i><i class="down"></i></div></div>
            </fieldset>
            <div class="name row"><label for="name">名称(N):</label><input id="name" class="text" value="前景色到背景色渐变"></div>
          </div>
          <div class="side"><button class="push default">确定</button><button class="push">取消</button><button class="push load">载入(L)...</button><button class="push">存储(S)...</button><button class="push new">新建(W)</button></div>
        </div>
        <fieldset class="kind">
          <legend><label for="kind">渐变类型(T):</label><span class="combo"><select id="kind"><option>实底</option></select><i class="caret"></i></span></legend>
          <div class="smooth row"><label for="smooth">平滑度(M):</label>${this.spin("smooth", "100", false)}<span>%</span></div>
          <div class="ramp"><div class="stops">${this.stop(true, false)}${this.stop(true, true)}</div><div class="bar"></div><div class="stops">${this.stop(false, false)}${this.stop(false, true)}</div></div>
          <fieldset class="color-stops"><legend>色标</legend>${this.stopRow("不透明度:", "stop-opacity", false)}${this.stopRow("颜色:", "stop-color", true)}</fieldset>
        </fieldset>
        <i class="resize"></i>
      </div></div>`;
  }

  private watermark() {
    return html`<svg class="mark" width="236" height="116" viewBox="0 0 236 116" fill="#fff">
      <text class="latin" x="0" y="77" font-size="52">Bai</text>
      <ellipse cx="89" cy="34" rx="8.500" ry="11"/><ellipse cx="105" cy="18" rx="8" ry="11.500"/><ellipse cx="126" cy="19" rx="8.500" ry="11"/><ellipse cx="138" cy="39" rx="8" ry="11"/>
      <path d="M113 36q8 0 13 9 4 5 10 10 10 9 4 17-6 9-17 6-9-3-19 0-11 2-16-5-6-8 2-17 7-6 11-12 5-8 12-8z"/>
      <text class="latin" x="94" y="71" font-size="32" fill="#bbb">du</text>
      <text class="han" x="150" y="74">经验</text>
      <text class="site" x="5" y="107">jingyan.baidu.com</text></svg>`;
  }

  render() {
    return html`<div class="app">${this.topBar()}
      <div class="work">${this.toolbox()}${this.document()}${this.panels()}</div>
      ${this.dialog()}<div class="highlight"></div>${this.watermark()}
    </div>`;
  }
}
